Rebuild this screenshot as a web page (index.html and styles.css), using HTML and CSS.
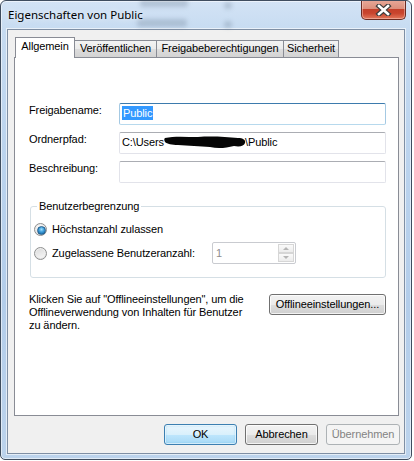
FILE: index.html
```html
<!DOCTYPE html>
<html lang="de">
<head>
<meta charset="utf-8">
<title>Eigenschaften von Public</title>
<link rel="stylesheet" href="styles.css">
</head>
<body>
<div class="window">
  <div class="titlebar">
    <span class="haze haze-a"></span>
    <span class="haze haze-b"></span>
    <span class="haze haze-c"></span>
    <span class="haze haze-d"></span>
    <span class="title">Eigenschaften von Public</span>
    <div class="close">
      <svg width="17" height="12" viewBox="0 0 17 12">
        <path d="M4 2 L13 10 M13 2 L4 10" stroke="#3d3d3d" stroke-width="5" stroke-linecap="square" fill="none"/>
        <path d="M4 2 L13 10 M13 2 L4 10" stroke="#ffffff" stroke-width="2.6" stroke-linecap="square" fill="none"/>
      </svg>
    </div>
  </div>
  <div class="client">
    <div class="tabs">
      <div class="tab tab-selected tab-w1">Allgemein</div>
      <div class="tab tab-w2">Veröffentlichen</div>
      <div class="tab tab-w3">Freigabeberechtigungen</div>
      <div class="tab tab-w4">Sicherheit</div>
    </div>
    <div class="panel">
      <div class="fields">
        <label class="field-label">Freigabename:</label>
        <div class="input input-focus"><span class="selected-text">Public</span></div>
        <label class="field-label">Ordnerpfad:</label>
        <div class="input">C:\Users<svg class="scribble" width="82" height="14" viewBox="0 0 82 14"><path d="M1 3 C10 1 22 2 34 2 C48 1 62 2 74 3 C79 3 82 5 81 8 C80 11 76 12 70 11 C62 13 54 14 46 12 C36 11 24 11 14 10 C8 10 3 9 1 7 C0 5 0 4 1 3 Z" fill="#050505"/></svg>\Public</div>
        <label class="field-label">Beschreibung:</label>
        <div class="input"></div>
      </div>
      <fieldset class="group">
        <legend class="group-title">Benutzerbegrenzung</legend>
        <div class="option">
          <span class="radio radio-checked"></span>
          <span class="option-label">Höchstanzahl zulassen</span>
        </div>
        <div class="option option-spin">
          <span class="radio"></span>
          <span class="option-label option-label-fixed">Zugelassene Benutzeranzahl:</span>
          <div class="spin">
            <span class="spin-value">1</span>
            <div class="spin-buttons">
              <span class="spin-btn spin-up"></span>
              <span class="spin-btn spin-down"></span>
            </div>
          </div>
        </div>
      </fieldset>
      <div class="offline">
        <p class="offline-text">Klicken Sie auf "Offlineeinstellungen", um die<br>Offlineverwendung von Inhalten für Benutzer<br>zu ändern.</p>
        <button class="btn btn-offline">Offlineeinstellungen...</button>
      </div>
    </div>
    <div class="actions">
      <button class="btn btn-default btn-w73">OK</button>
      <button class="btn btn-w73">Abbrechen</button>
      <button class="btn btn-disabled btn-w74" disabled>Übernehmen</button>
    </div>
  </div>
</div>
</body>
</html>
```

FILE: styles.css
```css
* { box-sizing: border-box; }

html, body {
  margin: 0;
  padding: 0;
  background: #ffffff;
}

body {
  font-family: "Liberation Sans", Arial, sans-serif;
  font-size: 11px;
  color: #000;
  letter-spacing: -0.1px;
}

.window {
  width: 412px;
  height: 460px;
  border: 1px solid #3f4d5f;
  border-radius: 6px 6px 5px 5px;
  background: linear-gradient(180deg, #d3e3f5 0px, #c6dbf1 30px, #bcd4ee 140px, #b3cdea 300px, #bcd3ec 460px);
  box-shadow: inset 0 0 0 1px rgba(255, 255, 255, 0.55);
  padding: 0 6px 5px 6px;
  display: flex;
  flex-direction: column;
  overflow: hidden;
}

.titlebar {
  height: 28px;
  flex: none;
  position: relative;
  display: flex;
  align-items: center;
  padding-left: 1px;
  padding-bottom: 1px;
}

.title {
  position: relative;
  font-family: "Noto Sans", "Open Sans", sans-serif;
  font-size: 11.5px;
  letter-spacing: 0;
  color: #000;
  text-shadow: 0 0 6px rgba(255, 255, 255, 0.9);
}

.haze {
  position: absolute;
  background: rgba(70, 85, 110, 0.22);
  filter: blur(2px);
  border-radius: 3px;
}
.haze-a { left: 133px; top: -2px; width: 48px; height: 8px; }
.haze-b { left: 130px; top: 18px; width: 50px; height: 8px; }
.haze-c { left: 217px; top: 1px; width: 8px; height: 7px; }
.haze-d { left: 217px; top: 20px; width: 8px; height: 7px; }

.close {
  position: absolute;
  top: -1px;
  right: -1px;
  width: 45px;
  height: 20px;
  border: 1px solid #6a2b22;
  border-top: none;
  border-radius: 0 0 5px 5px;
  background: linear-gradient(180deg, #e8a999 0%, #dc8f7c 45%, #c4402a 50%, #c9452e 70%, #e3785c 100%);
  box-shadow: inset 0 0 0 1px rgba(255, 220, 210, 0.45);
  display: flex;
  align-items: center;
  justify-content: center;
}

.client {
  flex: 1;
  border: 1px solid #7f8fa4;
  box-shadow: 0 0 0 1px rgba(255, 255, 255, 0.6);
  background: #f0f0f0;
  padding: 7px 5px 0 6px;
  display: flex;
  flex-direction: column;
}

.tabs {
  display: flex;
  align-items: flex-end;
  height: 20px;
  padding-left: 2px;
  flex: none;
}

.tab {
  height: 17px;
  margin-left: -1px;
  border: 1px solid #898c95;
  border-bottom: none;
  background: linear-gradient(180deg, #f3f3f3 0%, #ebebeb 50%, #dddddd 51%, #d3d3d3 100%);
  text-align: center;
  line-height: 15px;
  white-space: nowrap;
}

.tab-selected {
  position: relative;
  z-index: 1;
  height: 21px;
  margin-bottom: -1px;
  background: #ffffff;
  padding-top: 1px;
}

.tab-w1 { width: 60px; }
.tab-w2 { width: 83px; }
.tab-w3 { width: 128px; }
.tab-w4 { width: 56px; }

.panel {
  height: 359px;
  flex: none;
  border: 1px solid #898c95;
  background: #ffffff;
  padding: 45px 12px 0 14px;
}

.fields {
  display: grid;
  grid-template-columns: 90px 1fr;
  grid-auto-rows: 22px;
  row-gap: 7px;
}

.field-label {
  line-height: 13px;
  padding-top: 1px;
}

.input {
  height: 22px;
  border: 1px solid #e2e3ea;
  border-top-color: #abadb3;
  border-radius: 2px;
  padding: 0 2px;
  line-height: 19px;
  white-space: nowrap;
  background: #fff;
}

.input-focus {
  border-color: #b7d9ed;
  border-top-color: #3d7bad;
  border-left-color: #a4c9e3;
  border-right-color: #a4c9e3;
}

.selected-text {
  display: inline-block;
  background: #3399ff;
  color: #ffffff;
  line-height: 14px;
  padding: 0 1px;
}

.scribble {
  vertical-align: -3px;
  margin: 0 -1px 0 0;
}

.group {
  margin: 17px 0 0 1px;
  padding: 10px 0 13px 3px;
  border: 1px solid #d5dfe5;
  border-radius: 3px;
  min-width: 0;
}

.group-title {
  padding: 0 2px;
  margin-left: 3px;
  line-height: 13px;
}

.option {
  display: flex;
  align-items: center;
  height: 13px;
}

.option-spin {
  height: 22px;
  margin-top: 6px;
}

.option-label {
  margin-left: 5px;
  line-height: 13px;
  white-space: nowrap;
}

.option-label-fixed {
  width: 160px;
}

.radio {
  width: 13px;
  height: 13px;
  flex: none;
  border-radius: 50%;
  border: 1px solid #8e8f8f;
  background: radial-gradient(circle at 50% 40%, #ffffff 0%, #f0f0f0 45%, #d8d8d8 100%);
  position: relative;
}

.radio::after {
  content: "";
  position: absolute;
  left: 1px;
  top: 1px;
  width: 9px;
  height: 9px;
  border-radius: 50%;
  background: linear-gradient(160deg, #dcdcdc, #f7f7f7);
}

.radio-checked::after {
  left: 2px;
  top: 2px;
  width: 7px;
  height: 7px;
  border: 1px solid #265f8c;
  background: radial-gradient(circle at 50% 35%, #9fe0ff 0%, #3b9bd8 45%, #0e5a94 100%);
}

.spin {
  width: 84px;
  height: 22px;
  border: 1px solid #c9cbd0;
  border-radius: 2px;
  background: #ffffff;
  display: flex;
  justify-content: space-between;
  padding: 1px 1px 1px 3px;
}

.spin-value {
  color: #8d8d8d;
  line-height: 17px;
  padding-top: 1px;
}

.spin-buttons {
  width: 16px;
  display: flex;
  flex-direction: column;
  gap: 0;
}

.spin-btn {
  flex: 1;
  border: 1px solid #d6d6d6;
  background: linear-gradient(180deg, #fafafa, #ececec);
  display: flex;
  align-items: center;
  justify-content: center;
}

.spin-btn::after {
  content: "";
  width: 0;
  height: 0;
  border-left: 3px solid transparent;
  border-right: 3px solid transparent;
}

.spin-up::after { border-bottom: 3px solid #b5b5b5; }
.spin-down::after { border-top: 3px solid #b5b5b5; }

.offline {
  margin-top: 15px;
  display: flex;
  justify-content: space-between;
  align-items: flex-start;
}

.offline-text {
  margin: 0;
  line-height: 13px;
  white-space: nowrap;
}

.btn {
  font-family: "Liberation Sans", Arial, sans-serif;
  font-size: 11px;
  letter-spacing: -0.1px;
  color: #000;
  height: 21px;
  padding: 0;
  border: 1px solid #707070;
  border-radius: 3px;
  background: linear-gradient(180deg, #f2f2f2 0%, #ebebeb 50%, #dddddd 51%, #cfcfcf 100%);
  box-shadow: inset 0 0 0 1px rgba(255, 255, 255, 0.75);
  line-height: 17px;
  text-align: center;
  white-space: nowrap;
}

.btn-offline {
  width: 117px;
  margin-top: 1px;
}

.btn-default {
  border-color: #3c7fb1;
  background: linear-gradient(180deg, #eaf6fd 0%, #d9f0fc 50%, #bee6fd 51%, #a7d9f5 100%);
  box-shadow: inset 0 0 0 1px rgba(255, 255, 255, 0.6), inset 0 0 2px 1px rgba(80, 180, 235, 0.35);
}

.btn-disabled {
  border-color: #adb2b5;
  background: #f4f4f4;
  box-shadow: none;
  color: #838383;
}

.btn-w73 { width: 73px; }
.btn-w74 { width: 74px; }

.actions {
  display: flex;
  justify-content: flex-end;
  gap: 8px;
  margin-top: 8px;
  margin-right: -1px;
  flex: none;
}
```
